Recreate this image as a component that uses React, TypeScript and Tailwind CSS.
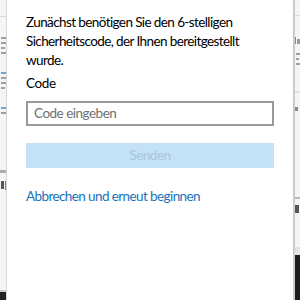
import React from "react";

const Bars: React.FC<{ items: { w: string; c: string }[] }> = ({ items }) => (
  <div className="flex flex-col gap-[3px] pl-[1px]">
    {items.map((it, i) => (
      <div key={i} className={`h-[2px] ${it.w} ${it.c}`} />
    ))}
  </div>
);

const LeftEdge: React.FC = () => (
  <div className="w-[7px] flex-shrink-0 flex flex-col bg-[#f4f5f6] border-r border-[#d4d6d8] overflow-hidden">
    <div className="h-[17px] border-b border-[#d8dadc]" />
    <div className="mt-[20px]">
      <Bars
        items={[
          { w: "w-[5px]", c: "bg-[#9aa0a6]" },
          { w: "w-[5px]", c: "bg-[#9aa0a6]" },
          { w: "w-[4px]", c: "bg-[#9aa0a6]" },
          { w: "w-[5px]", c: "bg-[#9aa0a6]" },
        ]}
      />
    </div>
    <div className="mt-[18px]">
      <Bars
        items={[
          { w: "w-[5px]", c: "bg-[#6fa6d8]" },
          { w: "w-[5px]", c: "bg-[#9aa0a6]" },
          { w: "w-[5px]", c: "bg-[#9aa0a6]" },
          { w: "w-[4px]", c: "bg-[#9aa0a6]" },
        ]}
      />
    </div>
    <div className="mt-[18px]">
      <Bars
        items={[
          { w: "w-[5px]", c: "bg-[#6fa6d8]" },
          { w: "w-[5px]", c: "bg-[#9aa0a6]" },
        ]}
      />
    </div>
    <div className="mt-[56px] h-[3px] bg-[#a8acb0]" />
    <div className="mt-[8px] flex gap-[1px] pl-[1px]">
      <div className="h-[8px] w-[3px] bg-[#555]" />
      <div className="h-[9px] w-[1px] bg-[#777]" />
    </div>
    <div className="mt-auto h-[2px] bg-[#c8cacc]" />
    <div className="h-[8px] bg-[#222]" />
  </div>
);

const RightEdge: React.FC = () => (
  <div className="w-[7px] flex-shrink-0 flex flex-col bg-[#f4f5f6] border-l-2 border-[#c9cbcd] overflow-hidden">
    <div className="h-[16px] border-b border-[#d8dadc]" />
    <div className="mt-[21px] flex gap-[1px]">
      <div className="h-[7px] w-[1px] bg-[#888]" />
      <div className="h-[5px] mt-[2px] w-[3px] bg-[#999]" />
    </div>
    <div className="mt-[9px]">
      <Bars
        items={[
          { w: "w-[4px]", c: "bg-[#9aa0a6]" },
          { w: "w-[3px]", c: "bg-[#9aa0a6]" },
          { w: "w-[4px]", c: "bg-[#9aa0a6]" },
        ]}
      />
    </div>
    <div className="mt-[26px] h-[2px] bg-[#dcdee0]" />
    <div className="mt-[14px] h-[4px] w-[3px] bg-[#888]" />
    <div className="mt-[86px] h-[2px] bg-[#b8bbbe]" />
    <div className="mt-[6px] h-[8px] w-[4px] bg-[#555]" />
    <div className="mt-[34px] h-[8px] bg-[#e2e4e6]" />
    <div className="flex-1 bg-[#1c1c1c]" />
  </div>
);

export default function App() {
  return (
    <div className="w-[300px] h-[300px] flex bg-white font-['Lato','Open_Sans',sans-serif]">
      <LeftEdge />
      <section className="flex-1 flex flex-col pl-[19px] pr-[12px] pt-[13px] text-black">
        <p className="text-[13.5px] leading-[19px] tracking-[-0.6px] w-[246px]">
          Zunächst benötigen Sie den 6-stelligen Sicherheitscode, der Ihnen bereitgestellt wurde.
        </p>
        <label className="mt-[4px] text-[13.5px] leading-[19px] tracking-[-0.4px]">Code</label>
        <div className="mt-[8px] h-[25px] w-[248px] border-2 border-[#9a9a9a] flex items-center px-[6px]">
          <span className="text-[13.5px] tracking-[-0.5px] text-[#707070]">Code eingeben</span>
        </div>
        <button className="mt-[17px] h-[25px] w-[248px] bg-[#c3e2f8] text-[13.5px] tracking-[-0.5px] text-[#a8c6dc] flex items-center justify-center">
          Senden
        </button>
        <a className="mt-[19px] text-[13.5px] leading-[19px] tracking-[-0.6px] text-[#1a72bb]">
          Abbrechen und erneut beginnen
        </a>
      </section>
      <RightEdge />
    </div>
  );
}
